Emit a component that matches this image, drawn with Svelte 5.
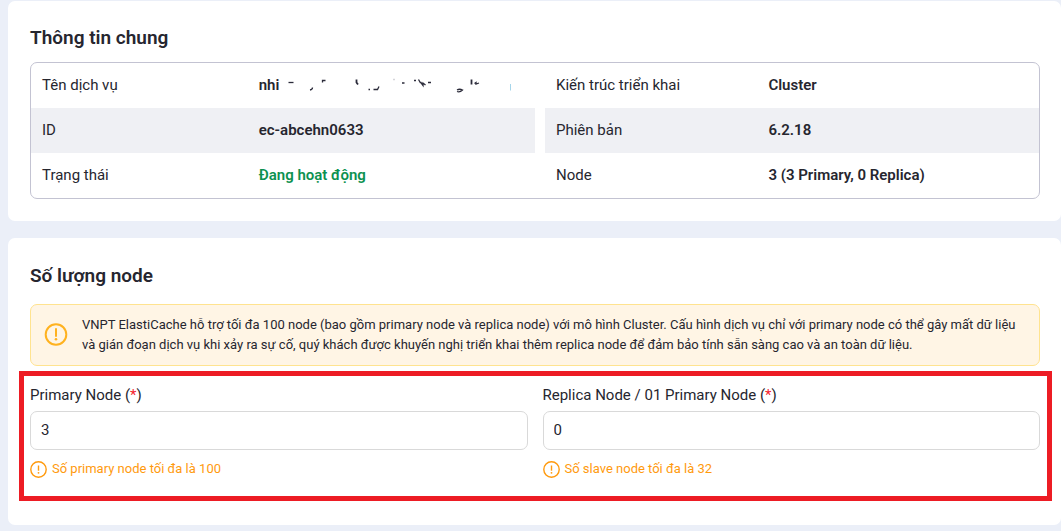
<script>
  const columns = [
    [
      { label: 'Tên dịch vụ', value: 'nhi', partial: true },
      { label: 'ID', value: 'ec-abcehn0633' },
      { label: 'Trạng thái', value: 'Đang hoạt động', active: true }
    ],
    [
      { label: 'Kiến trúc triển khai', value: 'Cluster' },
      { label: 'Phiên bản', value: '6.2.18' },
      { label: 'Node', value: '3 (3 Primary, 0 Replica)' }
    ]
  ];

  let fields = $state([
    { id: 'primary', label: 'Primary Node', value: '3', hint: 'Số primary node tối đa là 100' },
    { id: 'replica', label: 'Replica Node / 01 Primary Node', value: '0', hint: 'Số slave node tối đa là 32' }
  ]);
</script>

<main>
  <section class="panel">
    <h2>Thông tin chung</h2>
    <div class="info">
      {#each columns as rows}
        <div class="half">
          <table>
            <tbody>
              {#each rows as row}
                <tr>
                  <th scope="row">{row.label}</th>
                  <td class:active={row.active}>
                    {row.value}
                    {#if row.partial}
                      <!-- leftovers of the masked part of the name -->
                      <svg class="masked" viewBox="0 0 226 16" width="226" height="16" aria-hidden="true">
                        <g fill="none" stroke="#2b2b3a" stroke-width="1.3">
                          <path d="M2.500 4.500h5" />
                          <path d="M26.500 9.500q0 2-2.500 2.500" />
                          <path d="M36.500 4.500v-2h3" />
                          <path d="M70.500 1.500v3l1.500 2" stroke-width="1.800" />
                          <path d="M82.500 11.500h1.500M87.500 11.500h4l1.500-3" />
                          <path d="M107 1.500h2" stroke="#d5d5da" />
                          <path d="M116 5h2.500M128 2.500h2M132.500 1.500l2 3.500M134.500 4l2.500 3.500v-2.500l2.500 2M142 4.500h3" />
                          <path d="M171 12q2.500-1.500 5.500 0q-2.500 2.500-5.500 1.500" />
                          <path d="M185.500 1.500v5" stroke-width="1.800" />
                          <path d="M188.500 5.500l1.500-1v1.500l3-1" />
                        </g>
                        <path d="M224.500 6v6.500" stroke="#a5d5ea" />
                      </svg>
                    {/if}
                  </td>
                </tr>
              {/each}
            </tbody>
          </table>
        </div>
      {/each}
    </div>
  </section>

  <section class="panel">
    <h2>Số lượng node</h2>
    <div class="notice" role="note">
      <svg class="notice-icon" viewBox="0 0 24 24" width="24" height="24" fill="none" stroke="#ffb21f" stroke-width="2" aria-hidden="true">
        <circle cx="12" cy="11.500" r="10.300" />
        <path d="M12 6v7" stroke-linecap="round" />
        <circle cx="12" cy="16.300" r="1.300" fill="#ffb21f" stroke="none" />
      </svg>
      <p>
        VNPT ElastiCache hỗ trợ tối đa 100 node (bao gồm primary node và replica node) với mô hình
        Cluster. Cấu hình dịch vụ chỉ với primary node có thể gây mất dữ liệu và gián đoạn dịch vụ khi
        xảy ra sự cố, quý khách được khuyến nghị triển khai thêm replica node để đảm bảo tính sẵn sàng
        cao và an toàn dữ liệu.
      </p>
    </div>

    <div class="fields">
      {#each fields as field}
        <div class="field">
          <label for={field.id}>{field.label} (<span class="required">*</span>)</label>
          <input id={field.id} type="text" inputmode="numeric" bind:value={field.value} aria-describedby="{field.id}-hint" />
          <div class="hint" id="{field.id}-hint">
            <svg viewBox="0 0 17 17" width="17" height="17" fill="none" stroke="#ff9a0e" stroke-width="1.400" aria-hidden="true">
              <circle cx="8.500" cy="8.500" r="7.700" />
              <path d="M8.500 4.500v5.200" />
              <circle cx="8.500" cy="11.800" r=".9" fill="#ff9a0e" stroke="none" />
            </svg>
            <span>{field.hint}</span>
          </div>
        </div>
      {/each}
    </div>
  </section>
</main>

<style>
  :global(body) {
    margin: 0;
    background: #ebeff8;
  }

  main {
    display: flex;
    flex-direction: column;
    gap: 17px;
    padding: 1px 0 6px 8px;
    color: #26262f;
    font-family: Roboto, sans-serif;
    font-size: 15px;
    line-height: 20px;
  }

  .panel {
    padding: 24px 21px 24px 22px;
    border-radius: 7px;
    background: #fff;
  }

  .panel:first-child {
    padding-bottom: 22px;
  }

  h2 {
    margin: 0;
    font-size: 19px;
    font-weight: 600;
    line-height: 26px;
  }

  .info {
    display: grid;
    grid-template-columns: 1fr 1fr;
    margin-top: 11px;
    border: 1px solid #c3c3d2;
    border-radius: 7px;
  }

  .half + .half {
    padding-left: 10px;
  }

  table {
    width: 100%;
    border-spacing: 0;
    table-layout: fixed;
  }

  tr:nth-child(2) {
    background: #eff0f4;
  }

  th,
  td {
    height: 45px;
    box-sizing: border-box;
    padding: 0 11px 2px;
    text-align: left;
    white-space: nowrap;
  }

  th {
    width: 43%;
    font-weight: 400;
  }

  td {
    font-weight: 600;
  }

  .active {
    color: #0c9150;
  }

  .masked {
    margin-left: 3px;
    vertical-align: middle;
  }

  .notice {
    display: flex;
    align-items: center;
    gap: 14px;
    margin-top: 15px;
    padding: 10px 13px;
    border: 1px solid #ffe38f;
    border-radius: 7px;
    background: #fff5e5;
    font-size: 13px;
  }

  .panel:last-child {
    padding-top: 25px;
  }

  .notice-icon {
    flex: none;
  }

  .notice p {
    margin: 0;
  }

  .fields {
    display: grid;
    grid-template-columns: 1fr 1fr;
    gap: 15px;
    margin: 5px -12px 0 -11px;
    padding: 9px 7px 18px 6px;
    border: 5px solid #ed1c24;
  }

  .field {
    display: flex;
    flex-direction: column;
  }

  .required {
    color: #f5222d;
  }

  input {
    height: 39px;
    box-sizing: border-box;
    margin: 6px 0 10px;
    padding: 0 10px 2px;
    border: 1px solid #d9d9d9;
    border-radius: 7px;
    background: #fff;
    color: inherit;
    font: inherit;
  }

  .hint {
    display: flex;
    align-items: center;
    gap: 5px;
    color: #ff9a0e;
    font-size: 13px;
    line-height: 18px;
  }
</style>
